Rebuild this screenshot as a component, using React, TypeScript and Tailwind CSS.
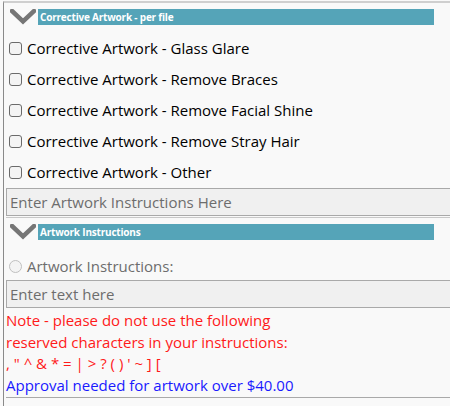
import React from "react";

const Chevron = () => (
  <svg width="26" height="16" viewBox="0 0 26 16" className="shrink-0">
    <path d="M2 2 L13 12.5 L24 2" fill="none" stroke="#767676" strokeWidth="4.5" strokeLinecap="square" />
  </svg>
);

const Header = ({ title }: { title: string }) => (
  <div className="flex items-center h-[16px]">
    <div className="w-[34px] pl-[6px] flex items-center">
      <Chevron />
    </div>
    <div className="w-[396px] h-[16px] bg-[#55a4b8] text-white font-bold text-[10px] tracking-[-0.2px] leading-[16px] pl-[2px] whitespace-nowrap">
      {title}
    </div>
  </div>
);

const items = [
  "Corrective Artwork - Glass Glare",
  "Corrective Artwork - Remove Braces",
  "Corrective Artwork - Remove Facial Shine",
  "Corrective Artwork - Remove Stray Hair",
  "Corrective Artwork - Other",
];

export default function App() {
  return (
    <div
      className="w-[450px] h-[406px] bg-[#f9f9f9] overflow-hidden relative"
      style={{ fontFamily: '"Open Sans", "Noto Sans", sans-serif' }}
    >
      <div className="ml-[3px] mt-[1px] border-t-2 border-t-[#cfcfcf] border-l border-l-[#8a8a8a] h-[405px] flex flex-col">
        <div className="pt-[6px]">
          <Header title="Corrective Artwork - per file" />
        </div>
        <div className="flex flex-col pt-[8px]">
          {items.map((t) => (
            <label key={t} className="flex items-center h-[31px] pl-[5px] text-[15px] text-black whitespace-nowrap">
              <span className="w-[13px] h-[13px] border border-[#6b6b6b] rounded-[3px] bg-[#f4f4f4] mr-[5px] shrink-0" />
              {t}
            </label>
          ))}
        </div>
        <div className="ml-[2px] h-[28px] border border-[#a9a9a9] border-r-0 bg-[#f0f0f0] text-[15px] text-[#6d6d6d] pl-[3px] leading-[26px] whitespace-nowrap">
          Enter Artwork Instructions Here
        </div>
        <div className="ml-[2px] h-[1px] mt-[1px] bg-[#c8c8c8]" />
        <div className="pt-[6px]">
          <Header title="Artwork Instructions" />
        </div>
        <div className="flex items-center h-[28px] mt-[12px] pl-[5px] text-[15px] text-[#6d6d6d] whitespace-nowrap">
          <span className="w-[13px] h-[13px] border border-[#c0c0c0] rounded-full bg-[#f4f4f4] mr-[5px] shrink-0" />
          Artwork Instructions:
        </div>
        <div className="ml-[2px] h-[28px] border border-[#a9a9a9] border-r-0 bg-[#f0f0f0] text-[15px] text-[#6d6d6d] pl-[3px] leading-[26px] whitespace-nowrap">
          Enter text here
        </div>
        <div className="ml-[2px] pt-[2px] text-[15px] leading-[21.7px] whitespace-nowrap">
          <div className="text-[#ff1a1a]">Note - please do not use the following</div>
          <div className="text-[#ff1a1a]">reserved characters in your instructions:</div>
          <div className="text-[#ff1a1a]">, " ^ &amp; * = | &gt; ? ( ) ' ~ ] [</div>
          <div className="text-[#1a1aff]">Approval needed for artwork over $40.00</div>
        </div>
        <div className="ml-[2px] mt-[0px] h-[1px] bg-[#a9a9a9]" />
      </div>
    </div>
  );
}
